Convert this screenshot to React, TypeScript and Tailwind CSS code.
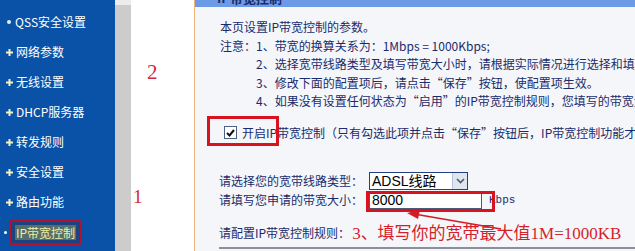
import React from 'react';

const menu = [
  'QSS安全设置',
  '网络参数',
  '无线设置',
  'DHCP服务器',
  '转发规则',
  '安全设置',
  '路由功能',
];

const Plus: React.FC = () => (
  <svg width="7" height="7" viewBox="0 0 7 7" className="shrink-0">
    <path d="M2.5 0h2v2.5H7v2H4.5V7h-2V4.5H0v-2h2.5z" fill="#f3f1c4" />
  </svg>
);

const App: React.FC = () => {
  return (
    <div className="flex h-[251px] w-[635px] overflow-hidden font-['Noto_Sans_CJK_SC',sans-serif] text-[12px]">
      {/* 左侧菜单 */}
      <aside className="w-[115px] shrink-0 bg-[#0a52a7] pt-[7px] text-white">
        {menu.map((item, i) => (
          <div key={item} className="flex h-[30px] items-center pl-[6px]">
            {i === 0 ? (
              <span className="mr-[4px] ml-[1px] h-[4px] w-[4px] rounded-full bg-[#e6f0f4]" />
            ) : (
              <span className="mr-[3px]">
                <Plus />
              </span>
            )}
            <span className="leading-none">{item}</span>
          </div>
        ))}
        <div className="flex h-[30px] items-center pl-[4px]">
          <span className="mr-[2px] h-[3px] w-[3px] rounded-full bg-white" />
          <div className="flex h-[25px] items-center rounded-[3px] border-2 border-[#b3122f] bg-[#1d4480] px-[4px]">
            <span className="bg-[#53706a] px-[1px] leading-[15px] text-[#eeeea6]">IP带宽控制</span>
          </div>
        </div>
      </aside>

      {/* 分隔条 */}
      <div className="flex w-[16px] shrink-0 flex-col bg-[#cccccc]">
        <div className="h-[5px] bg-[#ececec]" />
      </div>

      {/* 标注列 */}
      <div className="flex w-[63px] shrink-0 flex-col bg-white font-['Liberation_Serif',serif] text-[#d12a3c]">
        <span className="mt-[60px] pl-[16px] text-[21px] leading-[24px]">2</span>
        <span className="mt-[102px] pl-[2px] text-[19px] leading-[22px]">1</span>
      </div>

      {/* 主面板 */}
      <main className="relative min-w-0 flex-1 overflow-hidden border-l border-[#f1b57c] bg-[#f4f6fa] text-[#1a2c6b]">
        <div className="h-[7px] overflow-hidden bg-[#6c9ae6]">
          <div className="mt-[-9px] pl-[22px] text-[13px] font-bold leading-[14px] text-[#1a2c6b]">IP带宽控制</div>
        </div>

        <div className="mt-[11px] pl-[25px] leading-[18.5px] whitespace-nowrap">
          <div>本页设置IP带宽控制的参数。</div>
          <div>注意：1、带宽的换算关系为：1Mbps = 1000Kbps;</div>
          <div className="pl-[36px]">2、选择宽带线路类型及填写带宽大小时，请根据实际情况进行选择和填写，否则可能导致功能异常。</div>
          <div className="pl-[36px]">3、修改下面的配置项后，请点击“保存”按钮，使配置项生效。</div>
          <div className="pl-[36px]">4、如果没有设置任何状态为“启用”的IP带宽控制规则，您填写的带宽大小将不起作用。</div>
        </div>

        {/* 开启 */}
        <div className="relative mt-[12px] flex h-[20px] items-center pl-[29px] whitespace-nowrap">
          <span className="flex h-[13px] w-[13px] shrink-0 items-center justify-center border border-[#4d6185] bg-white">
            <svg width="9" height="8" viewBox="0 0 9 8">
              <path d="M1 4l2.5 2.5L8 1" fill="none" stroke="#111" strokeWidth="2" />
            </svg>
          </span>
          <span className="ml-[5px]">开启IP带宽控制（只有勾选此项并点击“保存”按钮后，IP带宽控制功能才能生效）</span>
          <div className="absolute top-[-7px] left-[12px] h-[30px] w-[72px] border-[3px] border-[#d8121f]" />
        </div>

        {/* 线路类型 */}
        <div className="mt-[28px] pl-[24px] whitespace-nowrap">
          <div className="flex h-[20px] items-center">
            <span className="w-[150px] shrink-0">请选择您的宽带线路类型：</span>
            <div className="flex h-[18px] w-[99px] border border-[#233f86] bg-white">
              <span className="flex-1 pl-[2px] font-['Liberation_Sans','Noto_Sans_CJK_SC',sans-serif] text-[14px] leading-[16px] text-black">ADSL线路</span>
              <span className="flex w-[15px] items-center justify-center border-l border-[#b6c4d8] bg-[#dfe6f0]">
                <svg width="9" height="6" viewBox="0 0 9 6">
                  <path d="M1 1l3.5 3.5L8 1" fill="none" stroke="#4d5a6e" strokeWidth="1.6" />
                </svg>
              </span>
            </div>
          </div>
          <div className="relative flex h-[19px] items-center">
            <span className="w-[150px] shrink-0">请填写您申请的带宽大小：</span>
            <div className="flex h-[17px] w-[113px] items-center border border-[#4c5a78] bg-white pl-[2px] font-['Liberation_Sans',sans-serif] text-[14px] text-black">
              8000
            </div>
            <span className="ml-[7px] font-['Liberation_Mono',monospace] text-[11px]">Kbps</span>
            <div className="absolute top-[0px] left-[147px] h-[21px] w-[129px] border-[3px] border-[#d8121f]" />
          </div>

          <div className="mt-[14px] flex items-start">
            <span className="leading-[18px]">请配置IP带宽控制规则：</span>
            <span className="mt-[-1px] ml-[2px] font-['Liberation_Serif','Noto_Sans_CJK_SC',serif] text-[17px] leading-[22px] text-[#d61f2c]">
              3、填写你的宽带最大值1M=1000KB
            </span>
          </div>
          <div className="mt-[2px] border-t-2 border-[#8a8f99]" />
        </div>

        {/* 箭头 */}
        <svg className="pointer-events-none absolute top-0 left-0" width="440" height="251">
          <line x1="306" y1="229" x2="222" y2="214.5" stroke="#d41c24" strokeWidth="1.5" />
          <polygon points="212,213 225,210 223,219" fill="#d41c24" />
        </svg>
      </main>
    </div>
  );
};

export default App;
